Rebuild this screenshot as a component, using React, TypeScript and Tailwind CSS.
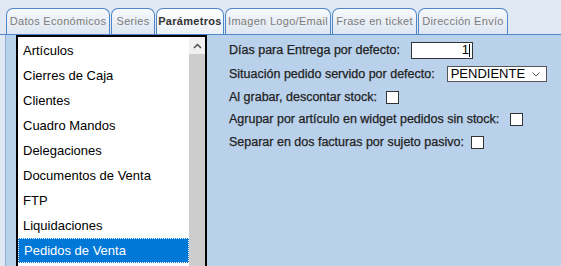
import React from 'react';

const tabs = [
  { label: 'Datos Económicos', w: 'w-[104px]' },
  { label: 'Series', w: 'w-[44px]' },
  { label: 'Parámetros', w: 'w-[68px]', active: true },
  { label: 'Imagen Logo/Email', w: 'w-[106px]' },
  { label: 'Frase en ticket', w: 'w-[85px]' },
  { label: 'Dirección Envío', w: 'w-[90px]' },
];

const items = [
  'Artículos',
  'Cierres de Caja',
  'Clientes',
  'Cuadro Mandos',
  'Delegaciones',
  'Documentos de Venta',
  'FTP',
  'Liquidaciones',
  'Pedidos de Venta',
];

const Check = ({ gap }: { gap: string }) => (
  <span className={`${gap} w-[13px] h-[13px] border border-[#333] bg-white shrink-0`} />
);

export default function App() {
  return (
    <div className="w-[561px] h-[266px] overflow-hidden bg-[#dfe8f3] font-['Liberation_Sans',Arial,sans-serif]">
      {/* Tabs */}
      <div className="flex items-end gap-px h-[35px] pl-[6px] border-b border-[#4d87c7]">
        {tabs.map((t) => (
          <div
            key={t.label}
            className={`${t.w} h-[26px] flex items-center justify-center rounded-t-[7px] border border-b-0 border-[#4d87c7] text-[11px] tracking-[0.3px] ${
              t.active
                ? 'bg-gradient-to-b from-white to-[#eaf0f7] text-[#333] font-bold'
                : 'bg-gradient-to-b from-[#f7f9fc] to-[#dde6f1] text-[#7b7b7b]'
            }`}
          >
            {t.label}
          </div>
        ))}
      </div>

      {/* Content */}
      <div className="ml-[5px] h-[231px] border-l border-[#8eaed6] bg-[#b9d1ea] flex">
        {/* Listbox */}
        <div className="ml-[10px] w-[191px] h-[240px] border-2 border-black bg-white flex shrink-0">
          <div className="w-[171px] pt-px">
            {items.map((it) => {
              const sel = it === 'Pedidos de Venta';
              return (
                <div
                  key={it}
                  className={`h-[25px] flex items-center pl-[5px] text-[13px] ${
                    sel
                      ? 'bg-[#0078d7] text-white border border-dotted border-white pl-[4px]'
                      : 'text-black'
                  }`}
                >
                  {it}
                </div>
              );
            })}
          </div>
          <div className="w-[16px] bg-[#cdcdcd] flex flex-col">
            <div className="h-[17px] bg-[#f0f0f0] flex items-center justify-center">
              <svg width="9" height="6" viewBox="0 0 9 6">
                <path d="M1 5 L4.5 1.5 L8 5" fill="none" stroke="#505050" strokeWidth="1.5" />
              </svg>
            </div>
          </div>
        </div>

        {/* Form */}
        <div className="pl-[22px] pt-[3px] flex flex-col text-[12.5px] text-[#222] [-webkit-text-stroke:0.25px_#222]">
          <div className="h-[24px] flex items-center">
            <span>Días para Entrega por defecto:</span>
            <div className="ml-[11px] w-[62px] h-[17px] border border-[#333] bg-white flex items-center justify-end pr-[2px] text-[13px] text-black [-webkit-text-stroke:0]">
              1<span className="w-px h-[13px] bg-black" />
            </div>
          </div>
          <div className="h-[24px] flex items-center">
            <span>Situación pedido servido por defecto:</span>
            <div className="ml-[12px] w-[100px] h-[16px] border border-[#555] bg-white flex items-center pl-[3px] pr-[6px] text-[13px] text-black [-webkit-text-stroke:0]">
              <span className="flex-1">PENDIENTE</span>
              <svg width="8" height="5" viewBox="0 0 8 5">
                <path d="M0.5 0.5 L4 4 L7.5 0.5" fill="none" stroke="#555" strokeWidth="1" />
              </svg>
            </div>
          </div>
          <div className="h-[22px] flex items-center">
            <span>Al grabar, descontar stock:</span>
            <Check gap="ml-[9px]" />
          </div>
          <div className="h-[23px] flex items-center">
            <span>Agrupar por artículo en widget pedidos sin stock:</span>
            <Check gap="ml-[11px]" />
          </div>
          <div className="h-[22px] flex items-center">
            <span>Separar en dos facturas por sujeto pasivo:</span>
            <Check gap="ml-[7px]" />
          </div>
        </div>
      </div>
    </div>
  );
}
